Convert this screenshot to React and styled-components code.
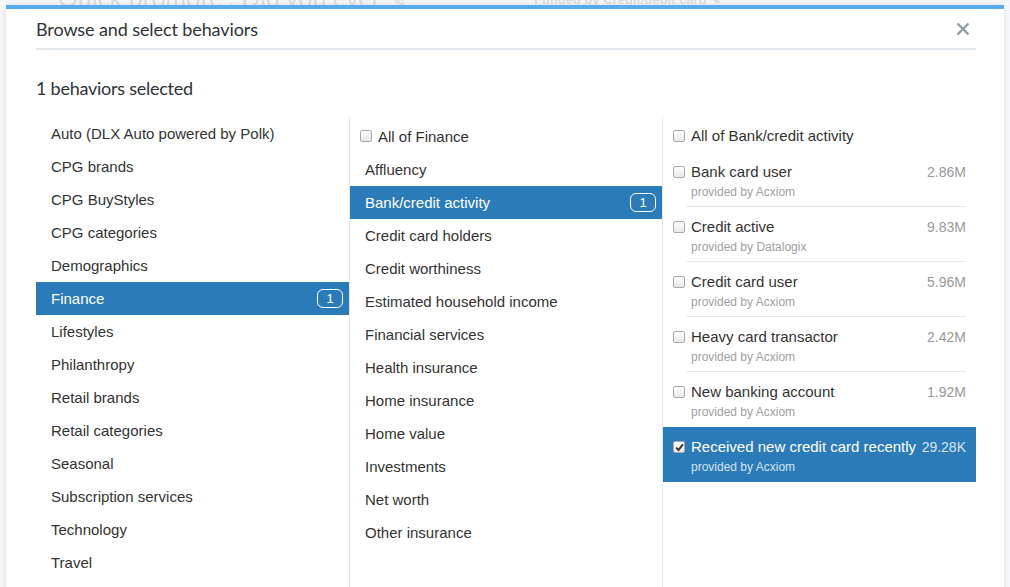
import React from "react";
import styled, { createGlobalStyle } from "styled-components";

const Global = createGlobalStyle`
  html, body { margin: 0; padding: 0; }
  body {
    background: #f6f7f8;
    font-family: "Liberation Sans", Arial, sans-serif;
    overflow: hidden;
  }
`;

const Page = styled.div`
  position: relative;
  width: 1010px;
  height: 587px;
  overflow: hidden;
`;

const PageHeader = styled.div`
  display: flex;
  align-items: flex-end;
  height: 7px;
  padding-left: 58px;
  color: #dcdee1;
  filter: blur(0.5px);
  white-space: nowrap;
`;

const PageTitle = styled.div`
  font-family: Lato, sans-serif;
  font-size: 25px;
  line-height: 25px;
  width: 476px;
  margin-bottom: -3px;
`;

const PageMeta = styled.div`
  font-size: 13px;
  font-weight: bold;
  line-height: 13px;
  margin-bottom: 1px;
`;

const Modal = styled.div`
  position: absolute;
  top: 5px;
  left: 6px;
  width: 998px;
  height: 600px;
  background: #fff;
  border-top: 4px solid #55abec;
  box-shadow: 0 0 5px rgba(0, 0, 0, 0.12);
  padding: 0 28px 0 30px;
  box-sizing: border-box;
`;

const Header = styled.div`
  display: flex;
  align-items: center;
  justify-content: space-between;
  height: 39px;
  border-bottom: 2px solid #e2e7ec;
`;

const Title = styled.h1`
  margin: 0;
  font-family: Lato, sans-serif;
  font-weight: 400;
  font-size: 18px;
  color: #2f3337;
  letter-spacing: -0.1px;
`;

const Close = styled.button`
  border: 0;
  background: none;
  padding: 0;
  margin-right: 6px;
  width: 14px;
  height: 14px;
  display: flex;
  cursor: pointer;
`;

const Count = styled.div`
  font-family: Lato, sans-serif;
  font-size: 18px;
  color: #2f3337;
  height: 67px;
  display: flex;
  align-items: center;
  padding-top: 8px;
  box-sizing: border-box;
  letter-spacing: -0.25px;
`;

const Columns = styled.div`
  display: grid;
  grid-template-columns: 313px 313px 314px;
  height: 480px;
`;

const Column = styled.div`
  border-left: ${(p) => (p.$first ? "none" : "1px solid #e6e9ec")};
  display: flex;
  flex-direction: column;
`;

const Row = styled.div`
  display: flex;
  align-items: center;
  height: 33px;
  padding: 0 6px 0 ${(p) => p.$pad || 15}px;
  font-size: 15px;
  color: ${(p) => (p.$active ? "#fff" : "#333")};
  background: ${(p) => (p.$active ? "#2b7bb9" : "transparent")};
  flex-shrink: 0;
`;

const AllRow = styled(Row)`
  height: ${(p) => p.$h || 36}px;
  padding-left: 10px;
  padding-top: 2px;
  box-sizing: border-box;
`;

const Label = styled.span`
  flex: 1;
`;

const Badge = styled.span`
  display: inline-flex;
  align-items: center;
  justify-content: center;
  width: 26px;
  height: 19px;
  box-sizing: border-box;
  border: 1px solid #fff;
  border-radius: 6px;
  font-size: 13px;
  color: #fff;
`;

const Box = styled.span`
  width: 12px;
  height: 12px;
  box-sizing: border-box;
  border: 1px solid #a9a9a9;
  border-radius: 2px;
  background: linear-gradient(#fdfdfd, #e9e9e9);
  margin-right: 6px;
  flex-shrink: 0;
  display: inline-flex;
  align-items: center;
  justify-content: center;
  align-self: ${(p) => (p.$top ? "flex-start" : "center")};
  margin-top: ${(p) => (p.$top ? 14 : 0)}px;
`;

const Item = styled.div`
  position: relative;
  display: flex;
  height: 55px;
  padding: 0 10px;
  background: ${(p) => (p.$active ? "#2b7bb9" : "transparent")};
  flex-shrink: 0;
  &::after {
    content: "";
    display: ${(p) => (p.$last ? "none" : "block")};
    position: absolute;
    left: 23px;
    right: 10px;
    bottom: 0;
    height: 1px;
    background: #e3e7eb;
  }
`;

const ItemBody = styled.div`
  flex: 1;
  display: flex;
  flex-direction: column;
  padding-top: 11px;
`;

const ItemTop = styled.div`
  display: flex;
  justify-content: space-between;
  align-items: baseline;
`;

const ItemName = styled.span`
  font-size: 15px;
  line-height: 18px;
  color: ${(p) => (p.$active ? "#fff" : "#333")};
`;

const ItemSize = styled.span`
  font-size: 14px;
  color: ${(p) => (p.$active ? "#d6e4f0" : "#999")};
`;

const Provider = styled.span`
  font-size: 12px;
  line-height: 14px;
  margin-top: 4px;
  color: ${(p) => (p.$active ? "#d2e2ef" : "#a0a0a0")};
`;

const Check = () => (
  <svg width="9" height="9" viewBox="0 0 9 9">
    <path d="M1.2 4.6 L3.5 7 L7.9 1.3" fill="none" stroke="#333" strokeWidth="1.9" />
  </svg>
);

const CheckBox = ({ checked, top }) => (
  <Box $top={top}>{checked && <Check />}</Box>
);

const categories = [
  "Auto (DLX Auto powered by Polk)",
  "CPG brands",
  "CPG BuyStyles",
  "CPG categories",
  "Demographics",
  "Finance",
  "Lifestyles",
  "Philanthropy",
  "Retail brands",
  "Retail categories",
  "Seasonal",
  "Subscription services",
  "Technology",
  "Travel",
];

const subs = [
  "Affluency",
  "Bank/credit activity",
  "Credit card holders",
  "Credit worthiness",
  "Estimated household income",
  "Financial services",
  "Health insurance",
  "Home insurance",
  "Home value",
  "Investments",
  "Net worth",
  "Other insurance",
];

const behaviors = [
  { name: "Bank card user", by: "Acxiom", size: "2.86M" },
  { name: "Credit active", by: "Datalogix", size: "9.83M" },
  { name: "Credit card user", by: "Acxiom", size: "5.96M" },
  { name: "Heavy card transactor", by: "Acxiom", size: "2.42M" },
  { name: "New banking account", by: "Acxiom", size: "1.92M" },
  { name: "Received new credit card recently", by: "Acxiom", size: "29.28K", on: true },
];

export default function App() {
  return (
    <Page>
      <Global />
      <PageHeader aria-hidden="true">
        <PageTitle>Quick promote : Did you ever ✎</PageTitle>
        <PageMeta>Funded by Credit/debit card ✎</PageMeta>
      </PageHeader>
      <Modal>
        <Header>
          <Title>Browse and select behaviors</Title>
          <Close aria-label="Close">
            <svg width="14" height="14" viewBox="0 0 14 14">
              <path d="M1.5 1.5 L12.5 12.5 M12.5 1.5 L1.5 12.5" stroke="#8d9cab" strokeWidth="2.4" />
            </svg>
          </Close>
        </Header>
        <Count>1 behaviors selected</Count>
        <Columns>
          <Column $first>
            {categories.map((c) => (
              <Row key={c} $active={c === "Finance"}>
                <Label>{c}</Label>
                {c === "Finance" && <Badge>1</Badge>}
              </Row>
            ))}
          </Column>
          <Column>
            <AllRow>
              <CheckBox />
              <Label>All of Finance</Label>
            </AllRow>
            {subs.map((s) => (
              <Row key={s} $active={s === "Bank/credit activity"}>
                <Label>{s}</Label>
                {s === "Bank/credit activity" && <Badge>1</Badge>}
              </Row>
            ))}
          </Column>
          <Column>
            <AllRow $h={35}>
              <CheckBox />
              <Label>All of Bank/credit activity</Label>
            </AllRow>
            {behaviors.map((b, i) => (
              <Item key={b.name} $active={b.on} $last={i >= behaviors.length - 2}>
                <CheckBox checked={b.on} top />
                <ItemBody>
                  <ItemTop>
                    <ItemName $active={b.on}>{b.name}</ItemName>
                    <ItemSize $active={b.on}>{b.size}</ItemSize>
                  </ItemTop>
                  <Provider $active={b.on}>provided by {b.by}</Provider>
                </ItemBody>
              </Item>
            ))}
          </Column>
        </Columns>
      </Modal>
    </Page>
  );
}
